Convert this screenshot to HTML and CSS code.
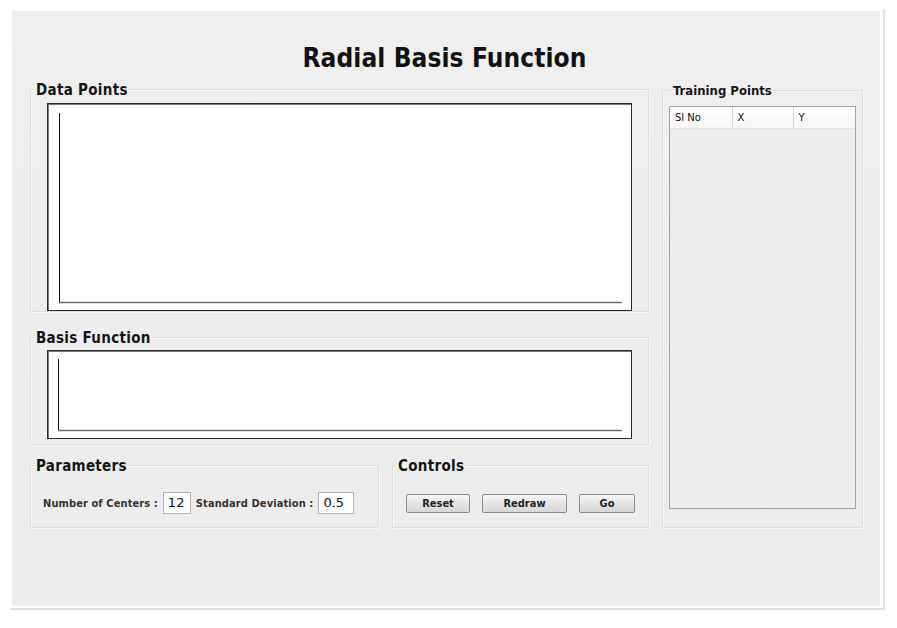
FILE: index.html
```html
<!DOCTYPE html>
<html>
<head>
<meta charset="utf-8">
<title>Radial Basis Function</title>
<link rel="stylesheet" href="styles.css">
</head>
<body>
<div class="window">
  <div class="frame">
    <h1 class="title">Radial Basis Function</h1>
    <div class="main">
      <div class="left">
        <fieldset class="group data-group">
          <legend class="legend legend-data">Data Points</legend>
          <div class="plot plot-data">
            <svg class="axes" width="583" height="206">
              <line x1="11.5" y1="9" x2="11.5" y2="199" stroke="#111" stroke-width="1"/>
              <line x1="11" y1="198.5" x2="574" y2="198.5" stroke="#6a6a6a" stroke-width="1.5"/>
            </svg>
          </div>
        </fieldset>
        <fieldset class="group basis-group">
          <legend class="legend legend-data">Basis Function</legend>
          <div class="plot plot-basis">
            <svg class="axes" width="583" height="87">
              <line x1="10.5" y1="8" x2="10.5" y2="80" stroke="#111" stroke-width="1"/>
              <line x1="10" y1="79.5" x2="574" y2="79.5" stroke="#6a6a6a" stroke-width="1.5"/>
            </svg>
          </div>
        </fieldset>
        <div class="bottom-row">
          <fieldset class="group params-group">
            <legend class="legend legend-params">Parameters</legend>
            <div class="row">
              <span class="label">Number of Centers :</span>
              <span class="input input-centers">12</span>
              <span class="label">Standard Deviation :</span>
              <span class="input input-sd">0.5</span>
            </div>
          </fieldset>
          <fieldset class="group controls-group">
            <legend class="legend legend-controls">Controls</legend>
            <div class="row buttons">
              <button class="btn btn-reset">Reset</button>
              <button class="btn btn-redraw">Redraw</button>
              <button class="btn btn-go">Go</button>
            </div>
          </fieldset>
        </div>
      </div>
      <div class="right">
        <fieldset class="group training-group">
          <legend class="legend legend-training">Training Points</legend>
          <div class="table-box">
            <table class="table">
              <thead>
                <tr>
                  <th class="col-sl">Sl No</th>
                  <th class="col-x">X</th>
                  <th class="col-y">Y</th>
                </tr>
              </thead>
            </table>
          </div>
        </fieldset>
      </div>
    </div>
  </div>
</div>
</body>
</html>
```
FILE: styles.css
```css
html, body {
  margin: 0;
  padding: 0;
  background: #ffffff;
}

body {
  font-family: "DejaVu Sans", "Liberation Sans", sans-serif;
  color: #111;
}

.window {
  margin: 9px 0 0 10px;
  width: 868px;
  padding: 2px 3px 2px 2px;
  background: #ffffff;
  border-right: 2px solid #dce3eb;
  border-bottom: 2px solid #dfdfdf;
}

.frame {
  width: 868px;
  height: 595px;
  background: linear-gradient(#efefef, #ececec);
  box-sizing: border-box;
  padding: 31px 17px 0 18px;
}

.title {
  margin: 0 0 5px 0;
  font-family: "DejaVu Sans Condensed", "DejaVu Sans", sans-serif;
  font-stretch: condensed;
  font-weight: bold;
  font-size: 26px;
  line-height: 32px;
  text-align: center;
  color: #111;
  padding-right: 4px;
  letter-spacing: 0.1px;
}

.main {
  display: flex;
  gap: 13px;
  align-items: flex-start;
}

.left {
  width: 619px;
  display: flex;
  flex-direction: column;
}

.right {
  width: 201px;
  margin-top: 2px;
}

.group {
  margin: 0;
  border: 1px solid #dcdcdc;
  border-radius: 2px;
  box-shadow: inset 1px 1px 0 #f9f9f9, 1px 1px 0 #f9f9f9;
  min-width: 0;
}

.legend {
  padding: 2px 2px 0 2px;
  font-family: "DejaVu Sans Condensed", "DejaVu Sans", sans-serif;
  font-stretch: condensed;
  font-weight: bold;
  font-size: 15px;
  line-height: 18px;
  letter-spacing: 0.3px;
  color: #151515;
}

.data-group {
  padding: 4px 15px 0 16px;
}

.legend-data {
  margin-left: -13px;
}

.basis-group {
  margin-top: 15px;
  padding: 3px 15px 5px 16px;
}

.plot {
  background: #ffffff;
  border: 1px solid #2a2a2a;
  box-shadow: inset 1px 1px 0 #7a7a7a;
  width: 585px;
  box-sizing: border-box;
}

.plot-data {
  height: 208px;
}

.plot-basis {
  height: 89px;
}

.axes {
  display: block;
}

.bottom-row {
  display: flex;
  gap: 13px;
  margin-top: 10px;
}

.params-group {
  width: 349px;
  box-sizing: border-box;
  padding: 17px 4px 13px 12px;
}

.legend-params {
  margin-left: -9px;
}

.controls-group {
  width: 257px;
  box-sizing: border-box;
  padding: 17px 4px 13px 13px;
}

.legend-controls {
  margin-left: -10px;
}

.row {
  display: flex;
  align-items: center;
  height: 22px;
}

.label {
  font-family: "DejaVu Sans Condensed", "DejaVu Sans", sans-serif;
  font-stretch: condensed;
  font-weight: bold;
  font-size: 11px;
  letter-spacing: 0.1px;
  color: #333;
  margin-right: 5px;
}

.input {
  box-sizing: border-box;
  height: 22px;
  background: #fff;
  border: 1px solid #b5b5b5;
  font-size: 13px;
  line-height: 20px;
  padding-left: 4px;
  color: #111;
  margin-right: 5px;
}

.input-centers {
  width: 28px;
}

.input-sd {
  width: 36px;
}

.buttons {
  gap: 0;
}

.btn {
  height: 19px;
  box-sizing: border-box;
  border: 1px solid #8d8d8d;
  border-radius: 2px;
  background: linear-gradient(#f7f7f7, #e2e2e2 55%, #d8d8d8);
  font-family: "DejaVu Sans Condensed", "DejaVu Sans", sans-serif;
  font-stretch: condensed;
  font-weight: bold;
  font-size: 11px;
  color: #222;
  padding: 0;
  line-height: 17px;
}

.btn-reset {
  width: 64px;
}

.btn-redraw {
  width: 85px;
  margin-left: 12px;
}

.btn-go {
  width: 56px;
  margin-left: 12px;
}

.training-group {
  box-sizing: border-box;
  width: 201px;
  padding: 7px 6px 18px 6px;
}

.legend-training {
  margin-left: 2px;
  font-size: 13px;
  line-height: 16px;
  letter-spacing: 0;
}

.table-box {
  height: 403px;
  box-sizing: border-box;
  border: 1px solid #a3a3a3;
  background: #eeeeee;
}

.table {
  border-collapse: collapse;
  width: 100%;
  table-layout: fixed;
}

.table th {
  box-sizing: border-box;
  height: 21px;
  padding: 1px 0 0 5px;
  text-align: left;
  font-weight: normal;
  font-size: 10px;
  color: #111;
  background: linear-gradient(#ffffff, #f6f6f6);
  border-right: 1px solid #d6d6d6;
  border-bottom: 1px solid #e4e4e4;
}

.table th:last-child {
  border-right: none;
}

.col-sl {
  width: 62px;
}

.col-x {
  width: 61px;
}
```
